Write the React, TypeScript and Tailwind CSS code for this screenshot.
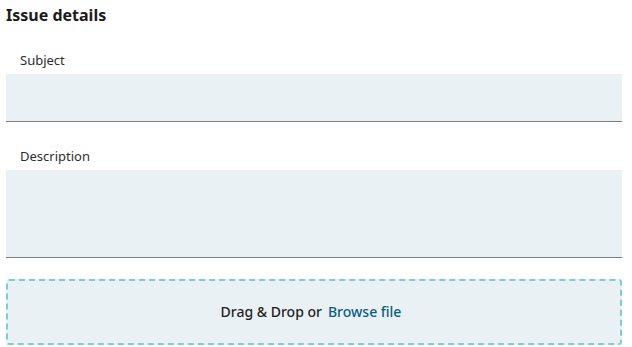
const Field = ({ label, height }: { label: string; height: string }) => (
  <div className="flex flex-col">
    <label className="px-[14px] text-[13px] leading-5 text-[#2d2d2d]">{label}</label>
    <div className={`mt-1 bg-[#eaf1f5] border-b border-[#7a7d80] ${height}`} />
  </div>
);

export default function App() {
  return (
    <div className="pl-1.5 pr-2.5 pt-[3px] bg-white font-['Noto_Sans',sans-serif] w-[632px] h-[347px]">
      <h2 className="text-base leading-6 font-bold text-[#1b1b1b]">Issue details</h2>
      <div className="mt-[23px] flex flex-col gap-6">
        <Field label="Subject" height="h-12" />
        <Field label="Description" height="h-[88px]" />
      </div>
      <div className="mt-[21px] h-[66px] pr-1.5 rounded-[3px] border-2 border-dashed border-[#7ecbd9] bg-[#eaf1f5] flex items-center justify-center text-sm">
        <span className="font-medium text-[#1f1f1f]">Drag &amp; Drop or</span>
        <button className="ml-1.5 font-medium text-[#0b5d85]">Browse file</button>
      </div>
    </div>
  );
}
